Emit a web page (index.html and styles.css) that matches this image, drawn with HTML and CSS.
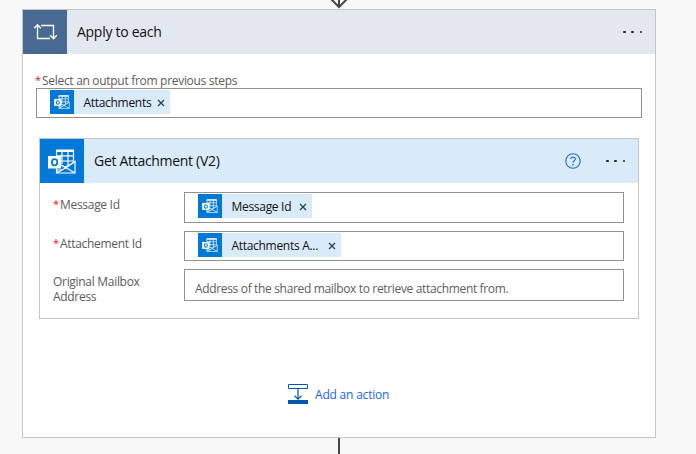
FILE: index.html
```html
<!DOCTYPE html>
<html lang="en">
<head>
<meta charset="utf-8">
<title>Apply to each</title>
<link rel="stylesheet" href="styles.css">
</head>
<body>
<svg width="0" height="0" class="defs">
  <symbol id="outlook" viewBox="0 0 28 25">
    <path d="M8.5 1H25.5V14L17 18L8.5 14Z" fill="#0078d7" stroke="#fff" stroke-width="1.2"/>
    <path d="M8 2H26" stroke="#fff" stroke-width="2"/>
    <path d="M9 6.8H25M9 12H25M14 1V15M20 1V16" stroke="#fff" stroke-width="1.2"/>
    <path d="M8.5 14L18 18.8L27 12.5V24H8.5Z" fill="#0078d7" stroke="#fff" stroke-width="1.2"/>
    <path d="M18 18.8L27 24M8.5 24L18 18.8" stroke="#fff" stroke-width="1.2"/>
    <path d="M18 18.8L8.5 24V20H15Z" fill="#fff" opacity=".5"/>
    <path d="M0 7H13V19.5H0Z" fill="#fff"/>
    <ellipse cx="6.6" cy="13.2" rx="2.7" ry="3.1" fill="none" stroke="#0078d7" stroke-width="1.8"/>
  </symbol>
</svg>
<div class="flow">
  <svg class="arrow" width="20" height="9" viewBox="0 0 20 9"><path d="M10 0V7M2 -1L10 7L18 -1" fill="none" stroke="#484644" stroke-width="2"/></svg>
  <section class="scope">
    <header class="bar">
      <div class="tile loop"><svg width="24" height="18" viewBox="0 0 24 18" fill="none" stroke="#fff" stroke-width="1.3"><path d="M4.5 2V15.5H17M1.2 5.2L4.5 1.8L7.8 5.2M8 2.5H20.5V15.5M17.2 12.3L20.5 15.7L23.8 12.3"/></svg></div>
      <h1 class="title outer-title">Apply to each</h1>
      <span class="dots"><i></i><i></i><i></i></span>
    </header>
    <div class="scope-body">
      <label class="label output-label"><b>*</b>Select an output from previous steps</label>
      <div class="field output"><span class="chip c1"><span class="chip-icon"><svg width="16" height="14"><use href="#outlook"/></svg></span><span class="chip-text">Attachments</span><svg class="x" width="8" height="8" viewBox="0 0 8 8"><path d="M1 1L7 7M7 1L1 7"/></svg></span></div>
      <section class="action">
        <header class="bar inner">
          <div class="tile mail"><svg width="28" height="25"><use href="#outlook"/></svg></div>
          <h2 class="title inner-title">Get Attachment (V2)</h2>
          <svg class="help" width="16" height="16" viewBox="0 0 16 16" fill="none" stroke="#2266e3" stroke-width="1.1"><circle cx="8" cy="8" r="7.2"/><path d="M5.8 6.1C5.8 3.2 10.3 3.3 10.3 6C10.3 7.8 8 7.8 8 9.8"/><path d="M8 11V12.4" stroke-width="1.3"/></svg>
          <span class="dots"><i></i><i></i><i></i></span>
        </header>
        <div class="rows">
          <div class="row r1"><label class="label"><b>*</b><span>Message Id</span></label>
            <div class="field"><span class="chip c2"><span class="chip-icon"><svg width="16" height="14"><use href="#outlook"/></svg></span><span class="chip-text">Message Id</span><svg class="x" width="8" height="8" viewBox="0 0 8 8"><path d="M1 1L7 7M7 1L1 7"/></svg></span></div></div>
          <div class="row r2"><label class="label"><b>*</b><span>Attachement Id</span></label>
            <div class="field"><span class="chip c3"><span class="chip-icon"><svg width="16" height="14"><use href="#outlook"/></svg></span><span class="chip-text">Attachments A...</span><svg class="x" width="8" height="8" viewBox="0 0 8 8"><path d="M1 1L7 7M7 1L1 7"/></svg></span></div></div>
          <div class="row r3"><label class="label"><span>Original Mailbox<br>Address</span></label>
            <div class="field"><span class="placeholder">Address of the shared mailbox to retrieve attachment from.</span></div></div>
        </div>
      </section>
      <div class="add"><svg width="20" height="20" viewBox="0 0 20 20" fill="none" stroke="#0058ad"><path d="M.5 .5H19.5V4.5H.5Z"/><path d="M10 5V15M6.5 11.8L10 15.2L13.5 11.8" stroke-width="1.2"/><path d="M0 16H20V20H0Z" fill="#0058ad" stroke="none"/></svg><span class="add-text">Add an action</span></div>
    </div>
  </section>
  <div class="stem"></div>
</div>
</body>
</html>
```
FILE: styles.css
```css
* { box-sizing: border-box; }
body { margin: 0; height: 454px; overflow: hidden; background: #f8f8f8; font-family: "Open Sans", "Noto Sans", sans-serif; font-size: 12px; color: #111; }
.defs { position: absolute; }
svg { display: block; flex: none; }
.flow { width: 634px; margin-left: 22px; display: flex; flex-direction: column; align-items: center; }
.arrow { height: 9px; }
.scope { width: 634px; height: 429px; border: 1px solid #c4c4c4; background: #fff; }
.bar { height: 44px; display: flex; align-items: center; background: #e3e7ef; }
.bar.inner { background: #d9eaf8; }
.tile { width: 44px; height: 44px; display: flex; align-items: center; justify-content: center; flex: none; }
.loop { background: #486991; }
.mail { background: #0078d7; }
.title { margin: 0 auto 0 10px; font-size: 14px; font-weight: 400; line-height: 20px; white-space: nowrap; }
.outer-title { letter-spacing: -.28px; }
.inner-title { letter-spacing: -.3px; }
.dots { display: flex; gap: 5.7px; margin-right: 13px; }
.inner .dots { margin-right: 13px; }
.dots i { width: 2.5px; height: 2.5px; border-radius: 50%; background: #222; }
.help { margin-right: 25px; }
.scope-body { padding: 19px 13px 0; }
.label { color: #5c5a58; display: flex; line-height: 15px; white-space: nowrap; letter-spacing: -.3px; }
.label b { width: 7px; color: #e81123; font-weight: 400; font-size: 11px; line-height: 13px; flex: none; }
.output-label { height: 15px; margin-left: -1px; }
.field { border: 1px solid #919191; background: #fff; display: flex; padding: 1px 0 0 13px; }
.output { height: 30px; }
.chip { height: 24px; background: #d9eaf8; display: flex; align-items: center; white-space: nowrap; }
.c1 { width: 120px; }
.c2 { width: 114px; }
.c3 { width: 143px; }
.chip-icon { width: 24px; height: 24px; background: #0078d7; display: flex; align-items: center; justify-content: center; flex: none; }
.chip-text { margin-left: 9.5px; letter-spacing: -.3px; }
.x { margin: 1px 5px 0 auto; fill: none; stroke: #174a52; stroke-width: 1.3; }
.action { width: 600px; height: 181px; margin: 20px 0 0 3px; border: 1px solid #c4c4c4; }
.rows { padding: 9px 14px 0 13px; display: flex; flex-direction: column; gap: 8px; }
.row { display: grid; grid-template-columns: 131px 440px; }
.r1 .field { height: 31px; }
.r2 .field { height: 30px; }
.r3 .field { height: 32px; padding-left: 10px; }
.r1 .label, .r2 .label, .r3 .label { padding-top: 5px; }
.placeholder { color: #605e5c; line-height: 16px; margin-top: 10px; letter-spacing: -.34px; white-space: nowrap; }
.add { display: flex; align-items: center; gap: 7px; margin: 65px 0 0 252px; color: #1765ee; height: 20px; white-space: nowrap; }
.add-text { letter-spacing: -.2px; padding-top: 1px; }
.stem { width: 2px; height: 16px; background: #484644; }
```
